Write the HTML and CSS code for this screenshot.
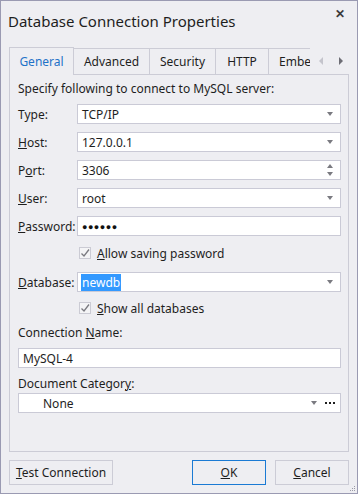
FILE: index.html
```html
<!DOCTYPE html>
<html lang="en">
<head>
    <meta charset="UTF-8">
    <title>Database Connection Properties</title>
    <link rel="stylesheet" href="styles.css">
</head>
<body>
    <div class="window">
        <div class="titlebar">
            <span class="title">Database Connection Properties</span>
            <span class="close">&#x2715;</span>
        </div>

        <div class="tabs">
            <div class="tab active">General</div>
            <div class="tab t-adv">Advanced</div>
            <div class="tab t-sec">Security</div>
            <div class="tab t-http">HTTP</div>
            <div class="tab clipped">Embe</div>
            <div class="tab-arrows">
                <svg width="6" height="8" viewBox="0 0 6 8"><path d="M5 0 L1 4 L5 8 Z" fill="#c4c4cc"/></svg>
                <svg width="6" height="8" viewBox="0 0 6 8"><path d="M1 0 L5 4 L1 8 Z" fill="#6d6d75"/></svg>
            </div>
        </div>

        <div class="panel">
            <div class="intro">Specify following to connect to MySQL server:</div>

            <div class="row">
                <label>Type:</label>
                <div class="field combo"><span>TCP/IP</span><i class="arrow"></i></div>
            </div>
            <div class="row">
                <label><u>H</u>ost:</label>
                <div class="field combo"><span>127.0.0.1</span><i class="arrow"></i></div>
            </div>
            <div class="row">
                <label>P<u>o</u>rt:</label>
                <div class="field combo"><span>3306</span>
                    <span class="spin"><i class="up"></i><i class="arrow"></i></span>
                </div>
            </div>
            <div class="row">
                <label><u>U</u>ser:</label>
                <div class="field combo"><span>root</span><i class="arrow"></i></div>
            </div>
            <div class="row">
                <label><u>P</u>assword:</label>
                <div class="field"><span class="dots">&#9679;&#9679;&#9679;&#9679;&#9679;&#9679;</span></div>
            </div>
            <div class="check">
                <span class="box"><svg width="12" height="12" viewBox="0 0 12 12"><path d="M2.5 6.5 L5 9 L10 2.5" fill="none" stroke="#7a7a80" stroke-width="1.3"/></svg></span>
                <span><u>A</u>llow saving password</span>
            </div>
            <div class="row db">
                <label><u>D</u>atabase:</label>
                <div class="field combo"><span class="selected">newdb</span><i class="arrow"></i></div>
            </div>
            <div class="check">
                <span class="box"><svg width="12" height="12" viewBox="0 0 12 12"><path d="M2.5 6.5 L5 9 L10 2.5" fill="none" stroke="#7a7a80" stroke-width="1.3"/></svg></span>
                <span><u>S</u>how all databases</span>
            </div>

            <div class="caption conn">Connection <u>N</u>ame:</div>
            <div class="field wide"><span>MySQL-4</span></div>

            <div class="caption cat">Document Categor<u>y</u>:</div>
            <div class="field wide combo">
                <span class="indent">None</span><i class="arrow"></i>
                <svg class="more" width="10" height="3" viewBox="0 0 10 3">
                    <rect x="0" y="0" width="2" height="2" fill="#1e1e1e"/>
                    <rect x="4" y="0" width="2" height="2" fill="#1e1e1e"/>
                    <rect x="8" y="0" width="2" height="2" fill="#1e1e1e"/>
                </svg>
            </div>
        </div>

        <div class="footer">
            <button class="button test"><u>T</u>est Connection</button>
            <div class="right">
                <button class="button default"><u>O</u>K</button>
                <button class="button"><u>C</u>ancel</button>
            </div>
        </div>
        <svg class="grip" width="7" height="7" viewBox="0 0 7 7">
            <rect x="5" y="1" width="1" height="1" fill="#9a9aa6"/>
            <rect x="3" y="3" width="1" height="1" fill="#9a9aa6"/>
            <rect x="5" y="3" width="1" height="1" fill="#9a9aa6"/>
            <rect x="1" y="5" width="1" height="1" fill="#9a9aa6"/>
            <rect x="3" y="5" width="1" height="1" fill="#9a9aa6"/>
            <rect x="5" y="5" width="1" height="1" fill="#9a9aa6"/>
        </svg>
    </div>
</body>
</html>
```

FILE: styles.css
```css
body {
    margin: 0;
    font-family: 'Noto Sans', 'Open Sans', sans-serif;
    font-size: 12px;
    color: #1e1e1e;
}
.window {
    position: relative;
    width: 358px;
    height: 494px;
    box-sizing: border-box;
    border: 1px solid #9a9ab2;
    background-color: #eeeef2;
}
.titlebar {
    height: 39px;
    display: flex;
    align-items: center;
    justify-content: space-between;
    padding: 0 12px 0 7px;
}
.title {
    font-size: 15px;
    margin-top: 1px;
}
.close {
    font-size: 12px;
    font-weight: bold;
    color: #3a3a3a;
    margin-top: -14px;
}
.tabs {
    display: flex;
    height: 27px;
    margin: 7px 0 0 8px;
    align-items: flex-end;
}
.tab {
    height: 26px;
    box-sizing: border-box;
    border: 1px solid #ccccd6;
    border-bottom: none;
    margin-left: -1px;
    display: flex;
    align-items: center;
    justify-content: center;
    padding: 0;
    white-space: nowrap;
}
.tab:first-child {
    margin-left: 0;
}
.tab.active {
    height: 28px;
    color: #1e72c8;
    background-color: #eeeef2;
    position: relative;
    z-index: 1;
    margin-bottom: -1px;
    width: 65px;
}
.t-adv {
    width: 77px;
}
.t-sec {
    width: 67px;
}
.t-http {
    width: 54px;
}
.tab.clipped {
    justify-content: flex-start;
    width: 42px;
    padding: 0 0 0 10px;
    overflow: hidden;
    border-right: none;
}
.tab-arrows {
    display: flex;
    gap: 14px;
    align-items: center;
    height: 26px;
    padding-left: 8px;
}
.panel {
    height: 378px;
    box-sizing: border-box;
    border: 1px solid #ccccd6;
    margin: 0 8px 0 8px;
    padding: 6px 7px 0 8px;
}
.intro {
    height: 16px;
    line-height: 16px;
    margin-bottom: 7px;
}
.row {
    display: flex;
    align-items: center;
    height: 20px;
    margin-bottom: 8px;
}
.row label {
    width: 59px;
}
.field {
    flex: 1;
    height: 20px;
    box-sizing: border-box;
    border: 1px solid #cacad6;
    background-color: #fff;
    display: flex;
    align-items: center;
    padding: 0 6px 0 4px;
    position: relative;
}
.field span {
    flex: 1;
}
.arrow {
    width: 0;
    height: 0;
    border-left: 3.5px solid transparent;
    border-right: 3.5px solid transparent;
    border-top: 4px solid #7a7a80;
    margin-right: 1px;
}
.up {
    width: 0;
    height: 0;
    border-left: 3.5px solid transparent;
    border-right: 3.5px solid transparent;
    border-bottom: 4px solid #7a7a80;
    margin-right: 1px;
}
.spin {
    flex: none !important;
    display: flex;
    flex-direction: column;
    gap: 4px;
}
.dots {
    font-size: 9px;
    letter-spacing: 0.5px;
    color: #111;
}
.selected {
    flex: none !important;
    background-color: #3399ff;
    color: #fff;
    padding: 0 1px;
    margin-left: -1px;
    margin-right: auto;
}
.check {
    display: flex;
    align-items: center;
    height: 16px;
    margin: 9px 0 0 61px;
}
.box {
    width: 12px;
    height: 12px;
    box-sizing: border-box;
    border: 1px solid #cbcbd4;
    background-color: #f4f4f6;
    margin-right: 6px;
    display: flex;
}
.box svg {
    margin: -1px;
}
.row.db {
    margin: 11px 0 0 0;
}
.row.db + .check {
    margin-top: 8px;
}
.caption {
    height: 16px;
    line-height: 16px;
}
.caption.conn {
    margin: 9px 0 7px 0;
}
.caption.cat {
    margin: 8px 0 1px 0;
}
.field.wide {
    flex: none;
}
.indent {
    padding-left: 20px;
}
.more {
    margin-left: 7px;
    margin-right: -1px;
}
.footer {
    display: flex;
    justify-content: space-between;
    margin: 8px 8px 0 8px;
}
.right {
    display: flex;
    gap: 9px;
}
.button {
    font-family: inherit;
    font-size: 12px;
    color: #1e1e1e;
    height: 25px;
    background-color: #eeeef2;
    border: 1px solid #ccccd6;
    padding: 0;
    margin: 0;
    width: 74px;
    white-space: nowrap;
}
.button.test {
    width: 104px;
}
.button.default {
    border-color: #1a7ad4;
}
.grip {
    position: absolute;
    right: 1px;
    bottom: 1px;
}
```
